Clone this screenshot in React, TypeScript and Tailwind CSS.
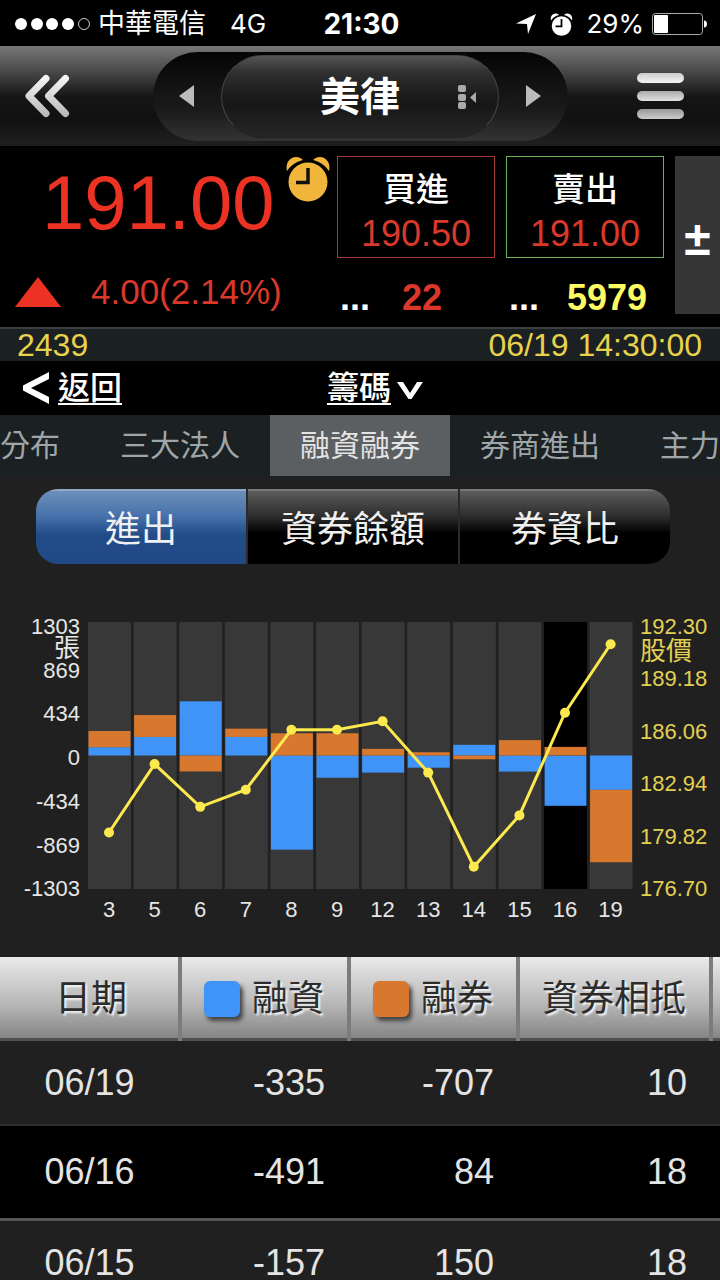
import { useState } from "react";

type Day = {
  label: string;
  margin: number;
  short: number;
  price: number;
};

const days: Day[] = [
  { label: "3", margin: 81, short: 158, price: 180 },
  { label: "5", margin: 181, short: 214, price: 184 },
  { label: "6", margin: 529, short: -156, price: 181.5 },
  { label: "7", margin: 181, short: 81, price: 182.5 },
  { label: "8", margin: -919, short: 217, price: 186 },
  { label: "9", margin: -217, short: 217, price: 186 },
  { label: "12", margin: -167, short: 65, price: 186.5 },
  { label: "13", margin: -119, short: 32, price: 183.5 },
  { label: "14", margin: 104, short: -37, price: 178 },
  { label: "15", margin: -157, short: 150, price: 181 },
  { label: "16", margin: -491, short: 84, price: 187 },
  { label: "19", margin: -335, short: -707, price: 191 },
];

const rows = [
  { date: "06/19", margin: -335, short: -707, offset: 10, style: "h-[85px] bg-[#202020] border-b-2 border-[#303030]" },
  { date: "06/16", margin: -491, short: 84, offset: 18, style: "h-[95px] bg-black border-b-3 border-[#555555]" },
  { date: "06/15", margin: -157, short: 150, offset: 18, style: "h-[84px] bg-[#202020]" },
];

const volumeTicks = ["1303", "869", "434", "0", "-434", "-869", "-1303"];
const priceTicks = ["192.30", "189.18", "186.06", "182.94", "179.82", "176.70"];

const BLUE = "#4094f7";
const ORANGE = "#d8782f";
const YELLOW = "#fbe94e";

// plot area inside the chart's own coordinates
const TOP = 22;
const BOTTOM = 289;
const ZERO = (TOP + BOTTOM) / 2;
const PITCH = 45.6;

const colX = (i: number) => 88 + i * PITCH;
const centerX = (i: number) => colX(i) + 21;
const volumeH = (v: number) => (Math.abs(v) / 1303) * (ZERO - TOP);
const priceY = (p: number) => TOP + ((192.3 - p) / 15.6) * (BOTTOM - TOP);

function AlarmClock({ className, hands }: { className: string; hands: string }) {
  return (
    <svg viewBox="0 0 44 46" className={className} aria-hidden="true">
      <circle cx="22" cy="26" r="19.5" fill="currentColor" />
      <path d="M1 15C-1 7 4 1 10 1c3 0 5 1 7 3C10 6 5 9 1 15Z" fill="currentColor" />
      <path d="M43 15c2-8-3-14-9-14-3 0-5 1-7 3 7 2 12 5 16 11Z" fill="currentColor" />
      <path d="M22 12v14.500H10" fill="none" stroke={hands} strokeWidth="3.500" />
    </svg>
  );
}

function StatusBar() {
  return (
    <div className="grid h-[46px] shrink-0 grid-cols-[1fr_auto_1fr] items-center bg-black pt-[2px] pr-3 pl-[15px] text-[27px] leading-8 text-white [font-family:Inter,'Noto_Sans_CJK_TC',sans-serif]">
      <div className="flex items-center">
        <svg viewBox="0 0 77 14" className="h-[14px] w-[77px]" aria-hidden="true">
          {[6, 22, 37, 53].map((x) => (
            <circle key={x} cx={x} cy="7" r="6" fill="#fff" />
          ))}
          <circle cx="69" cy="7" r="5.500" fill="none" stroke="#ccc" strokeWidth="1" />
        </svg>
        <span className="ml-[6px]">中華電信</span>
        <span className="ml-6 text-[26px]">4G</span>
      </div>
      <span className="text-[28px] font-bold">21:30</span>
      <div className="flex items-center justify-end">
        <svg viewBox="0 0 20 20" className="h-5 w-5" aria-hidden="true">
          <path d="M0 9.500 20 0 12 20 11 10Z" fill="#fff" />
        </svg>
        <AlarmClock className="ml-[14px] h-[23px] w-[23px]" hands="#000" />
        <span className="ml-[13px] text-[26px]">29%</span>
        <svg viewBox="0 0 56 22" className="ml-2 h-[22px] w-14" aria-hidden="true">
          <rect x=".5" y=".5" width="50" height="21" rx="3" fill="none" stroke="#aaa" />
          <rect x="2" y="2" width="14" height="18" rx="1" fill="#fff" />
          <path d="M52 7.500c4 0 4 7 0 7Z" fill="#fff" />
        </svg>
      </div>
    </div>
  );
}

function Header() {
  return (
    <header className="grid h-[100px] shrink-0 grid-cols-[1fr_auto_1fr] items-center border-b-2 border-[#1c1c1c] bg-[linear-gradient(#777,#4a4a4a_25%,#151515_52%,#111_75%,#202020)] pt-[2px] pr-9 pl-6">
      <button aria-label="上一頁" className="justify-self-start">
        <svg viewBox="0 0 46 44" className="h-11 w-[46px]" fill="none" strokeWidth="7" strokeLinecap="round" strokeLinejoin="round">
          <defs>
            <linearGradient id="silver" gradientUnits="userSpaceOnUse" x1="0" y1="0" x2="0" y2="44">
              <stop offset="0" stopColor="#fafafa" />
              <stop offset="1" stopColor="#b5b5b5" />
            </linearGradient>
          </defs>
          <path d="M22 4.500 5 22l17 17.500M41.500 4.500 24.500 22l17 17.500" stroke="url(#silver)" />
        </svg>
      </button>

      <div className="ml-3 flex h-[89px] w-[415px] items-center rounded-full bg-[linear-gradient(#050505,#151515_45%,#1a1a1a_65%,#333)]">
        <button aria-label="上一檔" className="flex flex-1 justify-center">
          <svg viewBox="0 0 15 22" className="h-[22px] w-[15px]">
            <path d="M15 0v22L0 11Z" fill="#bbb" />
          </svg>
        </button>
        <button className="grid h-[83px] w-[278px] grid-cols-[1fr_auto_1fr] items-center rounded-full border border-[#444] border-b-[#222] bg-[linear-gradient(#555,#303030_20%,#1c1c1c_48%,#171717_60%,#262626)] pt-[2px] text-[40px] leading-[48px] font-bold text-white">
          <span className="col-start-2">美律</span>
          <svg viewBox="0 0 18 24" className="ml-[58px] h-6 w-[18px]" fill="#aaa" aria-hidden="true">
            <rect x="0" y="0" width="8" height="7" rx="2" />
            <rect x="0" y="9" width="8" height="7" rx="2" />
            <rect x="0" y="17" width="8" height="7" rx="2" />
            <path d="M18 7v11l-6-5.500Z" />
          </svg>
        </button>
        <button aria-label="下一檔" className="flex flex-1 justify-center">
          <svg viewBox="0 0 15 22" className="h-[22px] w-[15px]">
            <path d="M0 0v22l15-11Z" fill="#bbb" />
          </svg>
        </button>
      </div>

      <button aria-label="選單" className="flex flex-col gap-2 justify-self-end">
        <span className="h-[10px] w-[47px] rounded-full bg-linear-to-b from-[#ccc] to-[#f5f5f5]" />
        <span className="h-[10px] w-[47px] rounded-full bg-linear-to-b from-[#aaa] to-[#e2e2e2]" />
        <span className="h-[10px] w-[47px] rounded-full bg-linear-to-b from-[#999] to-[#ccc]" />
      </button>
    </header>
  );
}

function Quote() {
  return (
    <section className="flex h-[181px] shrink-0 items-start bg-black pt-[10px]">
      <div className="flex-1">
        <div className="flex items-start pl-[42px]">
          <span className="mt-[3px] text-[76px] leading-[88px] text-[#ec3323]">191.00</span>
          <AlarmClock className="ml-3 h-[46px] w-11 text-[#f2b53c]" hands="#111" />
        </div>
        <div className="mt-[25px] flex items-center pl-[15px] text-[35px] leading-10 text-[#d9382b]">
          <svg viewBox="0 0 46 30" className="h-[30px] w-[46px]" aria-hidden="true">
            <path d="M23 0 46 30H0Z" fill="#ec3323" />
          </svg>
          <span className="ml-[30px]">4.00(2.14%)</span>
        </div>
      </div>

      <div className="w-[158px]">
        <button className="flex h-[102px] w-full flex-col items-center border border-[#a33a33] pt-[11px]">
          <span className="text-[33px] leading-[44px] font-medium text-white">買進</span>
          <span className="text-[36px] leading-[44px] text-[#d9382b]">190.50</span>
        </button>
        <div className="mt-5 flex pl-[3px] text-[36px] leading-10 font-bold">
          <span className="text-white">...</span>
          <span className="ml-8 text-[#d9382b]">22</span>
        </div>
      </div>

      <div className="ml-[11px] w-[158px]">
        <button className="flex h-[102px] w-full flex-col items-center border border-[#6ab45c] pt-[11px]">
          <span className="text-[33px] leading-[44px] font-medium text-white">賣出</span>
          <span className="text-[36px] leading-[44px] text-[#d9382b]">191.00</span>
        </button>
        <div className="mt-5 flex pl-[3px] text-[36px] leading-10 font-bold">
          <span className="text-white">...</span>
          <span className="ml-7 text-[#fdfb63]">5979</span>
        </div>
      </div>

      <button className="ml-[11px] h-[158px] w-[45px] bg-[#363636] pt-2 text-[48px] leading-[48px] font-bold text-white">
        ±
      </button>
    </section>
  );
}

function Chart() {
  return (
    <svg viewBox="0 0 720 357" className="mt-9 block w-full" fontSize="22" role="img" aria-label="融資融券進出">
      {days.map((d, i) => {
        const mH = volumeH(d.margin);
        const sH = volumeH(d.short);
        const mY = d.margin > 0 ? ZERO - mH : ZERO;
        // same sign stacks beyond the margin bar
        const stacked = d.margin > 0 === d.short > 0 ? mH : 0;
        const sY = d.short > 0 ? ZERO - stacked - sH : ZERO + stacked;
        return (
          <g key={d.label}>
            <rect x={colX(i)} y={TOP} width="43" height={BOTTOM - TOP} fill={d.label === "16" ? "#000" : "#383838"} />
            <rect x={colX(i) + 0.5} y={mY} width="42" height={mH} fill={BLUE} />
            <rect x={colX(i) + 0.5} y={sY} width="42" height={sH} fill={ORANGE} />
            <text x={centerX(i)} y="317" textAnchor="middle" fill="#e6e6e6">
              {d.label}
            </text>
          </g>
        );
      })}
      <polyline
        points={days.map((d, i) => `${centerX(i)},${priceY(d.price)}`).join(" ")}
        fill="none"
        stroke={YELLOW}
        strokeWidth="3"
      />
      {days.map((d, i) => (
        <circle key={d.label} cx={centerX(i)} cy={priceY(d.price)} r="5" fill={YELLOW} />
      ))}
      {volumeTicks.map((t, i) => (
        <text key={t} x="80" y={34 + i * 43.7} textAnchor="end" fill="#e6e6e6">
          {t}
        </text>
      ))}
      <text x="80" y="57" textAnchor="end" fontSize="26" fill="#e6e6e6">
        張
      </text>
      {priceTicks.map((t, i) => (
        <text key={t} x="640" y={34 + i * 52.4} fill="#e3d052">
          {t}
        </text>
      ))}
      <text x="640" y="60" fontSize="26" fill="#e3d052">
        股價
      </text>
    </svg>
  );
}

const TH = "border-r-4 border-[#7c7c7c] p-0 font-normal";

function HistoryTable() {
  return (
    <table className="w-full table-fixed border-separate border-spacing-0 text-[36px] leading-[44px] text-[#e4e4e4]">
      <colgroup>
        <col className="w-[182px]" />
        <col className="w-[169px]" />
        <col className="w-[169px]" />
        <col />
        <col className="w-[7px]" />
      </colgroup>
      <thead>
        <tr className="h-[84px] bg-[linear-gradient(#eaeaea,#b8b8b8_55%,#858585_96%,#505050_97%)] text-[#2c2c2c] [text-shadow:2px_2px_2px_#f5f5f5]">
          <th className={`${TH} pl-1`}>日期</th>
          <th className={TH}>
            <span className="flex items-center justify-end gap-3 pr-[23px]">
              <span className="h-9 w-9 rounded-md bg-[#4094f7] shadow-[3px_4px_4px_#444]" />
              融資
            </span>
          </th>
          <th className={TH}>
            <span className="flex items-center justify-end gap-3 pr-[23px]">
              <span className="h-9 w-9 rounded-md bg-[#d8782f] shadow-[3px_4px_4px_#444]" />
              融券
            </span>
          </th>
          <th className={`${TH} pr-[23px] text-right`}>資券相抵</th>
          <td />
        </tr>
      </thead>
      <tbody>
        {rows.map((r) => (
          <tr key={r.date}>
            <td className={`${r.style} p-0 pr-[3px] text-center`}>{r.date}</td>
            <td className={`${r.style} p-0 pr-[26px] text-right`}>{r.margin}</td>
            <td className={`${r.style} p-0 pr-[26px] text-right`}>{r.short}</td>
            <td className={`${r.style} p-0 pr-[26px] text-right`}>{r.offset}</td>
            <td className={`${r.style} p-0`} />
          </tr>
        ))}
      </tbody>
    </table>
  );
}

const tabs = ["分布", "三大法人", "融資融券", "券商進出", "主力"];
const views = ["進出", "資券餘額", "券資比"];

export default function App() {
  const [tab, setTab] = useState("融資融券");
  const [view, setView] = useState("進出");

  return (
    <main className="flex h-screen flex-col overflow-hidden bg-[#202020] [font-family:'Liberation_Sans','Noto_Sans_CJK_TC',sans-serif]">
      <StatusBar />
      <Header />
      <Quote />

      <div className="flex h-[34px] shrink-0 items-center justify-between border-t-2 border-[#3c4043] bg-[#1b2023] pr-[18px] pl-[17px] text-[32px] leading-8 text-[#e9d24c]">
        <span>2439</span>
        <span>06/19 14:30:00</span>
      </div>

      <nav className="grid h-[54px] shrink-0 grid-cols-[1fr_auto_1fr] items-center bg-black pl-[22px] text-[32px] leading-10 text-white">
        <a href="#back" className="flex items-center">
          <svg viewBox="0 0 28 32" className="h-8 w-7" aria-hidden="true">
            <path d="M27 0v7L9 16l18 9v7L1 18.500v-5Z" fill="#fff" />
          </svg>
          <span className="ml-2 font-medium underline decoration-2 underline-offset-4">返回</span>
        </a>
        <button className="ml-2 flex items-center">
          <span className="font-medium underline decoration-2 underline-offset-4">籌碼</span>
          <svg viewBox="0 0 26 18" className="mt-1 ml-[6px] h-[18px] w-[26px]" aria-hidden="true">
            <path d="M0 1h6l7 11 7-11h6L14.500 18h-3Z" fill="#fff" />
          </svg>
        </button>
      </nav>

      <div className="grid h-[61px] shrink-0 grid-cols-[1fr_2fr_2fr_2fr_1fr] bg-[#1b2023] text-[30px] leading-10 whitespace-nowrap [text-shadow:0_-2px_1px_#000]">
        {tabs.map((t, i) => (
          <button
            key={t}
            onClick={() => setTab(t)}
            className={`${t === tab ? "bg-[#5b5f61] text-[#e4e4e4]" : "text-[#9fa6a9]"} ${
              i === 0 ? "pr-[30px] text-right" : i === tabs.length - 1 ? "pl-[30px] text-left" : "text-center"
            }`}
          >
            {t}
          </button>
        ))}
      </div>

      <div className="mt-[13px] mr-[50px] ml-9 grid h-[75px] shrink-0 grid-cols-3 gap-[2px] overflow-hidden rounded-[22px] bg-[#2a2a2a] text-[36px] leading-[44px] text-[#f0f0f0] [text-shadow:0_1px_3px_#999]">
        {views.map((v) => (
          <button
            key={v}
            onClick={() => setView(v)}
            className={`border-t-2 pt-1 ${
              v === view
                ? "border-[#8fa9c9] bg-[linear-gradient(#6d90ba,#4570aa_35%,#224c88_60%,#204985)]"
                : "border-[#777] bg-[linear-gradient(#5c5c5c,#2c2c2c_35%,#000_58%)]"
            }`}
          >
            {v}
          </button>
        ))}
      </div>

      <div className="shrink-0">
        <Chart />
      </div>
      <div className="flex-1 overflow-hidden">
        <HistoryTable />
      </div>
    </main>
  );
}
